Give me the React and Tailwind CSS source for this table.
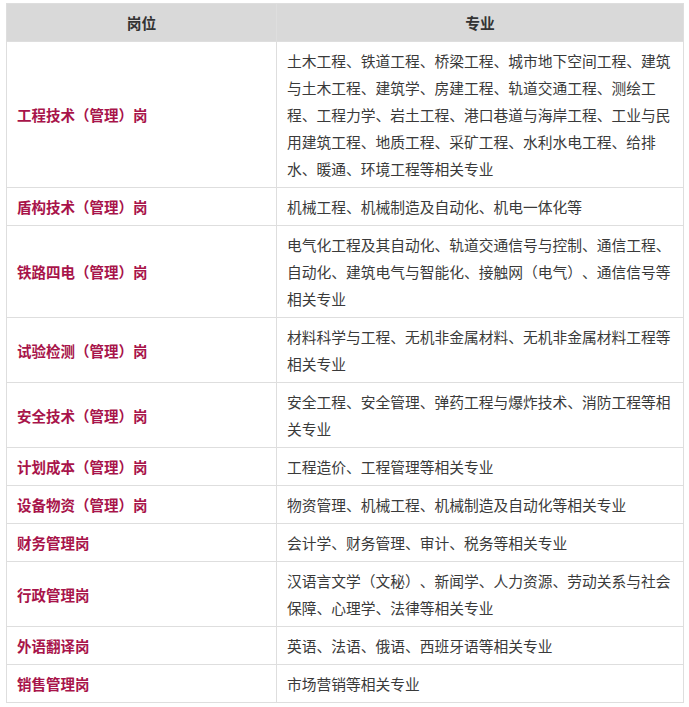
import React from "react";

const rows = [
  {
    post: "工程技术（管理）岗",
    major:
      "土木工程、铁道工程、桥梁工程、城市地下空间工程、建筑与土木工程、建筑学、房建工程、轨道交通工程、测绘工程、工程力学、岩土工程、港口巷道与海岸工程、工业与民用建筑工程、地质工程、采矿工程、水利水电工程、给排水、暖通、环境工程等相关专业",
  },
  { post: "盾构技术（管理）岗", major: "机械工程、机械制造及自动化、机电一体化等" },
  {
    post: "铁路四电（管理）岗",
    major:
      "电气化工程及其自动化、轨道交通信号与控制、通信工程、自动化、建筑电气与智能化、接触网（电气）、通信信号等相关专业",
  },
  {
    post: "试验检测（管理）岗",
    major: "材料科学与工程、无机非金属材料、无机非金属材料工程等相关专业",
  },
  {
    post: "安全技术（管理）岗",
    major: "安全工程、安全管理、弹药工程与爆炸技术、消防工程等相关专业",
  },
  { post: "计划成本（管理）岗", major: "工程造价、工程管理等相关专业" },
  { post: "设备物资（管理）岗", major: "物资管理、机械工程、机械制造及自动化等相关专业" },
  { post: "财务管理岗", major: "会计学、财务管理、审计、税务等相关专业" },
  {
    post: "行政管理岗",
    major: "汉语言文学（文秘）、新闻学、人力资源、劳动关系与社会保障、心理学、法律等相关专业",
  },
  { post: "外语翻译岗", major: "英语、法语、俄语、西班牙语等相关专业" },
  { post: "销售管理岗", major: "市场营销等相关专业" },
];

const App = () => {
  return (
    <div
      className="bg-white min-h-screen pt-[3px] pl-[6px]"
      style={{ fontFamily: '"Noto Sans CJK SC", "Noto Sans", sans-serif' }}
    >
      <table className="border-collapse w-[677px] table-fixed text-[14.75px] leading-[27px] [text-spacing-trim:space-all]">
        <colgroup>
          <col className="w-[270px]" />
          <col className="w-[407px]" />
        </colgroup>
        <thead>
          <tr className="bg-[#d9d9d9]">
            <th className="border border-[#dedede] py-[5px] font-bold text-[#333] text-center">
              岗位
            </th>
            <th className="border border-[#dedede] py-[5px] font-bold text-[#333] text-center">
              专业
            </th>
          </tr>
        </thead>
        <tbody>
          {rows.map((row) => (
            <tr key={row.post}>
              <td className="border border-[#dedede] py-[5px] pl-[10px] align-middle font-bold text-[14.5px] text-[#a8144a]">
                {row.post}
              </td>
              <td className="border border-[#dedede] py-[5px] pl-[10px] pr-[5px] align-middle text-[#3a3a3a]">
                {row.major}
              </td>
            </tr>
          ))}
        </tbody>
      </table>
    </div>
  );
};

export default App;
